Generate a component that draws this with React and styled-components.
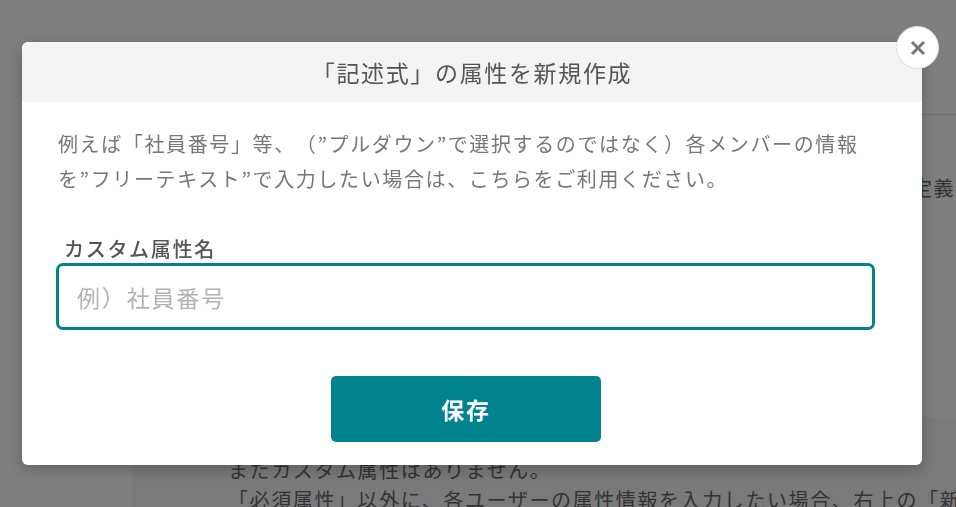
import React from "react";
import styled, { createGlobalStyle } from "styled-components";

const Global = createGlobalStyle`
  html, body { margin: 0; padding: 0; height: 100%; overflow: hidden; }
  body {
    font-family: "Noto Sans CJK JP", "Noto Sans", sans-serif;
    background: #fff;
    text-spacing-trim: space-all;
  }
  #root { height: 100%; }
  * { box-sizing: border-box; }
`;

const Page = styled.div`
  width: 956px;
  height: 507px;
  display: flex;
  overflow: hidden;
  background: #fff;
`;
const Sidebar = styled.div`
  width: 132px;
  flex: none;
  background: #fff;
`;
const Main = styled.div`
  flex: 1;
  background: #f5f5f5;
  display: flex;
  flex-direction: column;
  min-width: 0;
`;
const TopBar = styled.div`
  height: 115px;
  flex: none;
  background: #fff;
  border-bottom: 1px solid #ddd;
`;
const Definition = styled.div`
  height: 302px;
  flex: none;
  background: #fff;
  padding: 60px 0 0 780px;
  font-size: 20px;
  letter-spacing: 1.6px;
  line-height: 26px;
  color: #666;
  white-space: nowrap;
`;
const Notice = styled.div`
  padding: 38px 0 0 96px;
  font-size: 20px;
  letter-spacing: 1.6px;
  line-height: 30px;
  color: #666;
  white-space: nowrap;
`;
const Overlay = styled.div`
  position: fixed;
  inset: 0;
  background: rgba(0, 0, 0, 0.5);
`;
const Modal = styled.div`
  position: fixed;
  left: 22px;
  top: 42px;
  width: 900px;
  height: 423px;
  background: #fff;
  border-radius: 6px;
  box-shadow: 0 4px 16px rgba(0, 0, 0, 0.25);
`;
const Header = styled.div`
  height: 60px;
  background: #f3f3f3;
  border-radius: 6px 6px 0 0;
  display: flex;
  align-items: center;
  justify-content: center;
  font-size: 23px;
  letter-spacing: 1.65px;
  color: #555;
`;
const Body = styled.div`
  padding: 24px 36px 0 36px;
`;
const Description = styled.p`
  margin: 0;
  font-size: 20px;
  letter-spacing: 1.62px;
  line-height: 35px;
  color: #777;
  white-space: nowrap;
`;
const Label = styled.label`
  display: block;
  margin: 41px 0 0 6px;
  font-size: 20px;
  letter-spacing: 1.7px;
  line-height: 24px;
  font-weight: 500;
  color: #555;
`;
const Input = styled.input`
  display: block;
  width: 819px;
  height: 67px;
  margin: 2px 0 0 -2px;
  padding: 0 18px;
  border: 3px solid #00838f;
  border-radius: 7px;
  outline: none;
  font-family: inherit;
  font-size: 23px;
  letter-spacing: 1.84px;
  color: #555;
  &::placeholder { color: #b2b2b2; opacity: 1; }
`;
const Save = styled.button`
  display: flex;
  align-items: center;
  justify-content: center;
  width: 270px;
  height: 66px;
  margin: 46px 0 0 273px;
  border: 0;
  border-radius: 5px;
  background: #00838f;
  color: #fff;
  font-family: inherit;
  font-size: 23px;
  letter-spacing: 1.84px;
  font-weight: 700;
`;
const Close = styled.button`
  position: fixed;
  left: 896px;
  top: 26px;
  width: 43px;
  height: 43px;
  padding: 0;
  display: flex;
  align-items: center;
  justify-content: center;
  background: #fff;
  border: 1px solid #ddd;
  border-radius: 50%;
  color: #777;
`;

export default function App() {
  return (
    <>
      <Global />
      <Page>
        <Sidebar />
        <Main>
          <TopBar />
          <Definition>定義す</Definition>
          <Notice>
            またカスタム属性はありません。
            <br />
            「必須属性」以外に、各ユーザーの属性情報を入力したい場合、右上の「新規
          </Notice>
        </Main>
      </Page>
      <Overlay />
      <Modal>
        <Header>「記述式」の属性を新規作成</Header>
        <Body>
          <Description>
            例えば「社員番号」等、（”プルダウン”で選択するのではなく）各メンバーの情報
            <br />
            を”フリーテキスト”で入力したい場合は、こちらをご利用ください。
          </Description>
          <Label htmlFor="attr">カスタム属性名</Label>
          <Input id="attr" placeholder="例）社員番号" />
          <Save type="button">保存</Save>
        </Body>
      </Modal>
      <Close type="button" aria-label="閉じる">
        <svg width="16" height="16" viewBox="0 0 16 16" fill="none">
          <path d="M2 2L14 14M14 2L2 14" stroke="currentColor" strokeWidth="3" />
        </svg>
      </Close>
    </>
  );
}
